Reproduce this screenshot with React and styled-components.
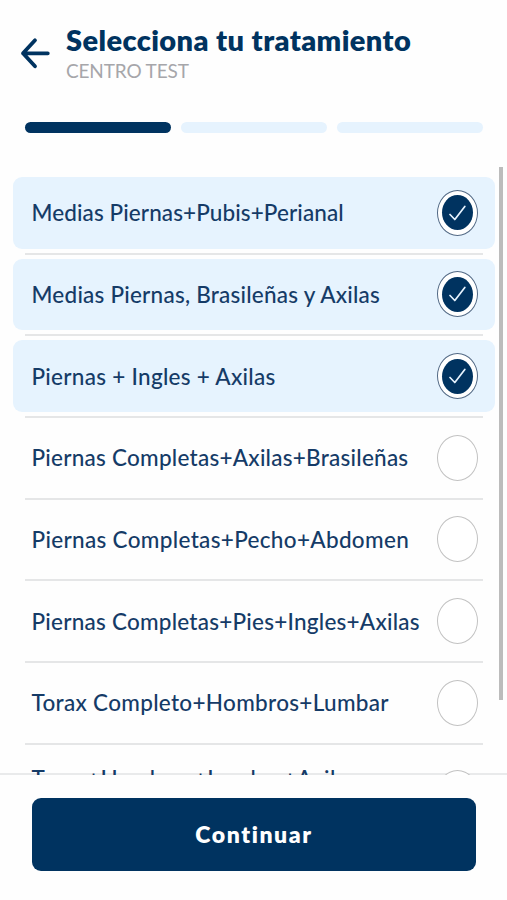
import { useState } from 'react';
import styled, { createGlobalStyle } from 'styled-components';

const GlobalStyle = createGlobalStyle`
    * {
        box-sizing: border-box;
    }
    body {
        margin: 0;
        background-color: #fff;
        font-family: Lato, 'Noto Sans', sans-serif;
        color: #003360;
    }
    button {
        font-family: inherit;
        cursor: pointer;
    }
`;

const Screen = styled.main`
    width: 507px;
    height: 900px;
    display: flex;
    flex-direction: column;
    overflow: hidden;
    background-color: #fefefe;
`;

const Header = styled.header`
    height: 122px;
    flex-shrink: 0;
    display: flex;
    align-items: flex-start;
    padding: 24px 20px 0;
`;

const BackButton = styled.button`
    width: 46px;
    height: 32px;
    margin-top: 13px;
    padding: 0;
    border: 0;
    background: none;
    text-align: left;
    svg {
        display: block;
    }
`;

const Title = styled.h1`
    margin: 0;
    font-size: 29px;
    line-height: 32px;
    font-weight: 800;
    letter-spacing: 0.4px;
    white-space: nowrap;
`;

const Center = styled.p`
    margin: 4px 0 0;
    font-size: 19px;
    line-height: 22px;
    font-weight: 400;
    letter-spacing: -0.15px;
    color: #a6a6aa;
`;

const Steps = styled.div`
    display: grid;
    grid-template-columns: repeat(3, 1fr);
    gap: 10.5px;
    flex-shrink: 0;
    padding: 0 24.5px 0 25px;
`;

const Step = styled.span`
    height: 11px;
    border-radius: 6px;
    background-color: ${(props) => (props.$active ? '#003360' : '#e6f3fe')};
`;

const ListArea = styled.section`
    flex: 1;
    min-height: 0;
    margin-top: 34px;
    margin-bottom: -2px;
    position: relative;
    z-index: 1;
    display: flex;
    overflow: hidden;
`;

const List = styled.ul`
    width: 482px;
    margin: 0 4px 0 13px;
    padding: 10px 0 0;
    list-style: none;
`;

const ScrollThumb = styled.div`
    width: 4px;
    height: 533px;
    background-color: #bcbcbc;
`;

const Item = styled.li`
    &:not(:last-child)::after {
        content: '';
        display: block;
        height: 2px;
        margin: 4px 12px;
        background-color: #e5e6e7;
    }
`;

const Row = styled.button`
    width: 100%;
    height: ${(props) => (props.$tall ? 89 : 71.67)}px;
    display: flex;
    align-items: center;
    justify-content: space-between;
    padding: 0 17px 0 18.5px;
    border: 0;
    border-radius: 9px;
    background-color: ${(props) => (props.$selected ? '#e6f3fe' : 'transparent')};
`;

const Label = styled.span`
    padding-top: 1px;
    padding-bottom: ${(props) => (props.$tall ? 29 : 0)}px;
    color: #153b67;
    font-size: 22.5px;
    line-height: 28px;
    font-weight: 500;
    letter-spacing: ${(props) => props.$spacing}px;
    white-space: nowrap;
`;

const Radio = styled.span`
    width: 41px;
    height: 46px;
    flex-shrink: 0;
    display: flex;
    align-items: center;
    justify-content: center;
    border: 1.5px solid ${(props) => (props.$selected ? '#526985' : '#c2c2c2')};
    border-radius: 50%;
    background-color: #fff;
`;

const Dot = styled.span`
    width: 31px;
    height: 35px;
    display: flex;
    align-items: center;
    justify-content: center;
    border-radius: 50%;
    background-color: #003360;
`;

const Footer = styled.footer`
    height: 127px;
    flex-shrink: 0;
    padding: 23px 31px 0 32px;
    border-top: 2px solid #e9eaeb;
`;

const Continue = styled.button`
    width: 100%;
    height: 73px;
    padding: 0 0 2px;
    border: 0;
    border-radius: 9px;
    background-color: #003360;
    color: #fff;
    font-size: 23px;
    font-weight: 800;
    letter-spacing: 1.6px;
`;

const treatments = [
    { name: 'Medias Piernas+Pubis+Perianal', spacing: 0.1 },
    { name: 'Medias Piernas, Brasileñas y Axilas', spacing: 0.23 },
    { name: 'Piernas + Ingles + Axilas', spacing: 0.28 },
    { name: 'Piernas Completas+Axilas+Brasileñas', spacing: 0.25 },
    { name: 'Piernas Completas+Pecho+Abdomen', spacing: 0.33 },
    { name: 'Piernas Completas+Pies+Ingles+Axilas', spacing: 0.24 },
    { name: 'Torax Completo+Hombros+Lumbar', spacing: 0.31 },
    { name: 'Torax+Hombros+Lumbar+Axilas', spacing: 0.31, tall: true },
];

const BackIcon = () => (
    <svg width="30" height="32" viewBox="0 0 30 32" fill="none" stroke="#003360" strokeWidth="3.8" strokeLinecap="round" strokeLinejoin="round">
        <path d="M27.8 16.3H3M15 3.3L3 16.3L15 29.3" />
    </svg>
);

const CheckIcon = () => (
    <svg width="18" height="18" viewBox="0 0 18 18" fill="none" stroke="#e6f3fe" strokeWidth="1.7" strokeLinecap="round" strokeLinejoin="round">
        <path d="M1 10.5L5.8 15.5L15.8 2.5" />
    </svg>
);

const Treatment = ({ data, selected, onToggle }) => (
    <Item>
        <Row $selected={selected} $tall={data.tall} onClick={onToggle}>
            <Label $spacing={data.spacing} $tall={data.tall}>
                {data.name}
            </Label>
            <Radio $selected={selected}>
                {selected ? (
                    <Dot>
                        <CheckIcon />
                    </Dot>
                ) : null}
            </Radio>
        </Row>
    </Item>
);

const App = () => {
    const [selected, setSelected] = useState([0, 1, 2]);

    const toggle = (index) => {
        setSelected(selected.includes(index) ? selected.filter((el) => el !== index) : [...selected, index]);
    };

    return (
        <Screen>
            <GlobalStyle />
            <Header>
                <BackButton aria-label="Volver">
                    <BackIcon />
                </BackButton>
                <div>
                    <Title>Selecciona tu tratamiento</Title>
                    <Center>CENTRO TEST</Center>
                </div>
            </Header>
            <Steps>
                <Step $active />
                <Step />
                <Step />
            </Steps>
            <ListArea>
                <List>
                    {treatments.map((el, index) => (
                        <Treatment key={el.name} data={el} selected={selected.includes(index)} onToggle={() => toggle(index)} />
                    ))}
                </List>
                <ScrollThumb />
            </ListArea>
            <Footer>
                <Continue>Continuar</Continue>
            </Footer>
        </Screen>
    );
};

export default App;
